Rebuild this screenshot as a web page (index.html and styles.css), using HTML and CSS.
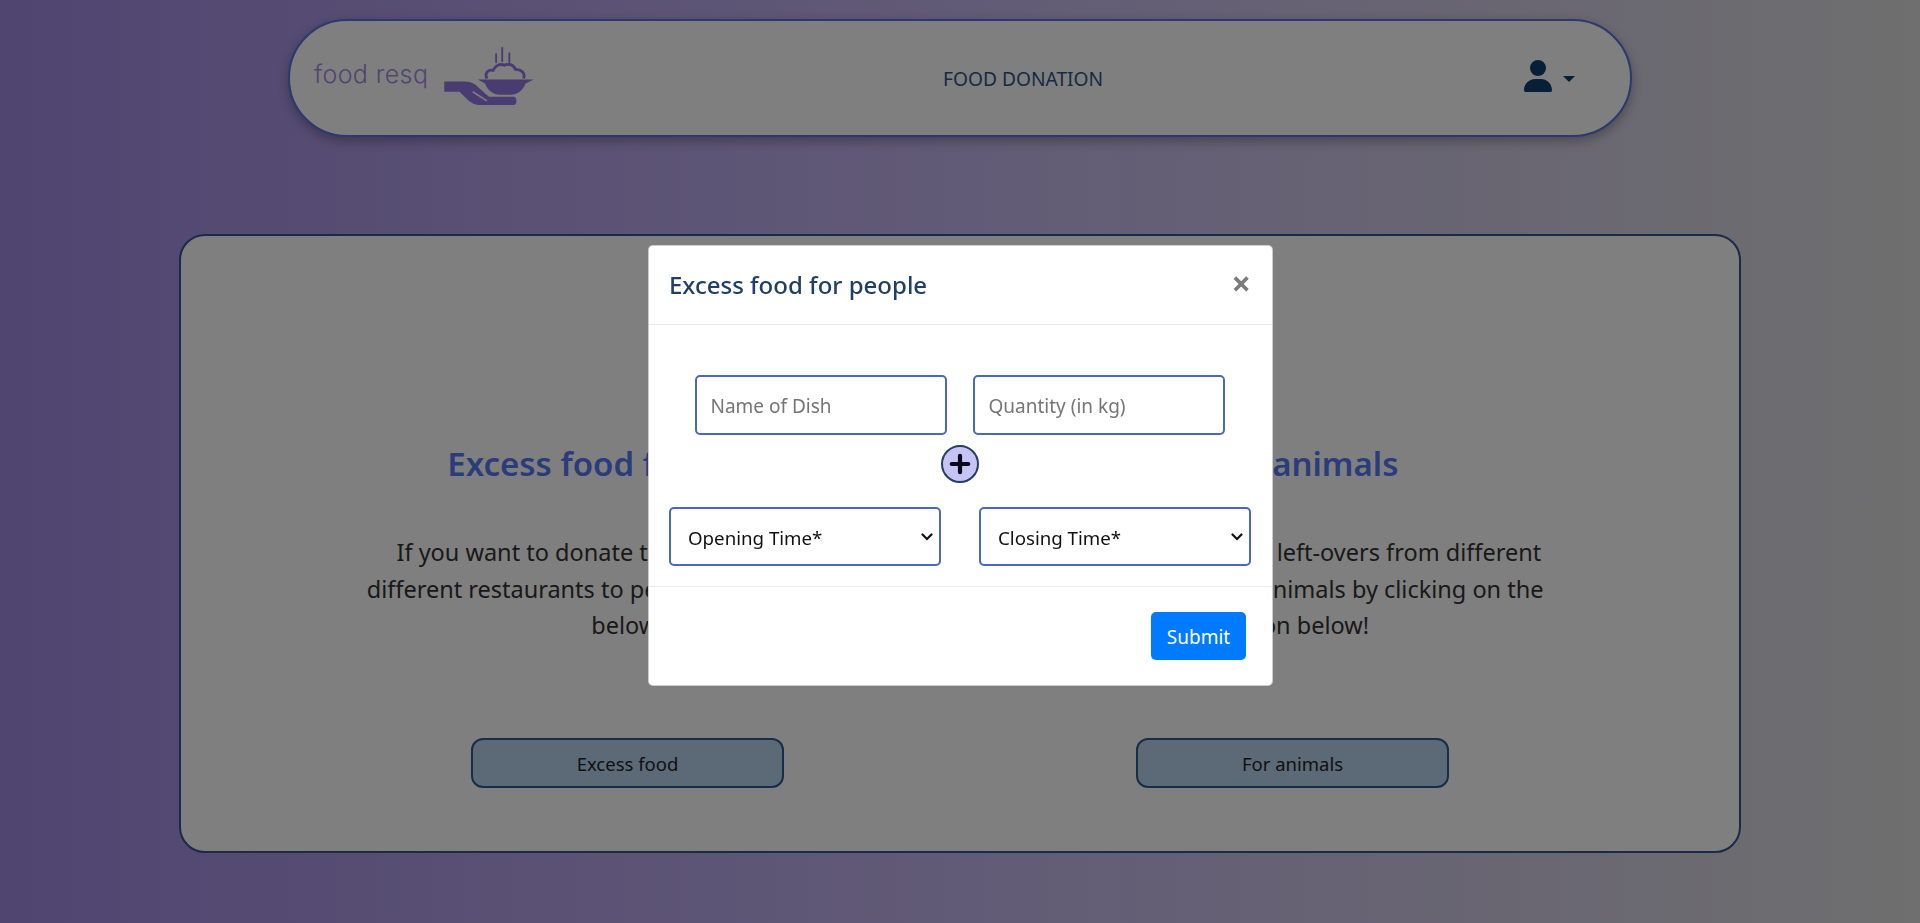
FILE: index.html
```html
<!DOCTYPE html>
<html lang="en">
<head>
<meta charset="utf-8">
<title>Food Resq</title>
<link rel="stylesheet" href="styles.css">
</head>
<body>
<nav class="navbar">
  <a class="brand">
    <span class="brand-text">food resq</span>
    <svg class="brand-icon" viewBox="0 0 88 58" aria-hidden="true">
      <g class="icon-line" stroke-width="1.800" stroke-linecap="round">
        <path d="M51 7v8M57 1v13M64 6v9"/>
      </g>
      <path class="icon-line" stroke-width="2.800" d="M42 31c-3-6 2-9 6-8 2-5 7-7 11-5 4-2 9-1 11 4 6 0 10 4 8 9"/>
      <path class="icon-fill" d="M33 32h55l-8 4c-3 7-8 11-15 11H55c-7 0-12-4-15-11z"/>
      <path class="icon-fill" d="M0 34h20c7 0 11 3 15 7l9 8h24c4 0 4 8 0 8H34c-5 0-9-3-13-7l-6-6H0z"/>
      <path class="icon-notch" d="M28 44l14 9"/>
    </svg>
  </a>
  <span class="nav-title">FOOD DONATION</span>
  <div class="user-menu">
    <svg class="user-icon" viewBox="0 0 448 512" aria-hidden="true"><path d="M224 256a128 128 0 1 0 0-256 128 128 0 0 0 0 256zm-45.700 48C79.800 304 0 383.800 0 482.300 0 498.700 13.300 512 29.700 512h388.600c16.400 0 29.700-13.300 29.700-29.700C448 383.800 368.200 304 269.700 304h-91.400z"/></svg>
    <span class="caret"></span>
  </div>
</nav>

<main class="panel">
  <section class="col">
    <h2 class="col-title">Excess food for people</h2>
    <p class="col-text">If you want to donate this extra food from<br>different restaurants to people, click the button<br>below!</p>
    <button class="col-btn" type="button">Excess food</button>
  </section>
  <section class="col">
    <h2 class="col-title">Feed animals</h2>
    <p class="col-text">You can donate your left-overs from different<br>restaurants to your animals by clicking on the<br>button below!</p>
    <button class="col-btn" type="button">For animals</button>
  </section>
</main>

<div class="backdrop"></div>

<div class="modal">
  <header class="modal-head">
    <h5 class="modal-title">Excess food for people</h5>
    <span class="modal-close">×</span>
  </header>
  <div class="modal-body">
    <div class="dish-row">
      <input class="field" type="text" placeholder="Name of Dish">
      <input class="field" type="text" placeholder="Quantity (in kg)">
    </div>
    <button class="add-btn" type="button">
      <svg viewBox="0 0 20 20" aria-hidden="true"><path d="M10 2.500v15M2.500 10h15" stroke="#0a0a1e" stroke-width="3.800" stroke-linecap="round"/></svg>
    </button>
    <div class="time-row">
      <select class="field time"><option>Opening Time*</option></select>
      <select class="field time"><option>Closing Time*</option></select>
    </div>
  </div>
  <footer class="modal-foot">
    <button class="submit" type="button">Submit</button>
  </footer>
</div>
</body>
</html>
```
FILE: styles.css
```css
* { box-sizing: border-box; }
html, body { height: 100%; }
body {
  margin: 0;
  height: 923px;
  overflow: hidden;
  padding-top: 19px;
  font-family: "Noto Sans", "Open Sans", sans-serif;
  background: linear-gradient(90deg, #a08ae2 0%, #c4b6ee 50%, #dedede 100%);
  color: #000;
}
.navbar {
  width: 1344px;
  height: 118px;
  margin: 0 auto;
  display: grid;
  grid-template-columns: 629px auto 1fr;
  align-items: center;
  padding: 0 55px 0 24px;
  background: #fff;
  border: 2px solid #5a6fe0;
  border-radius: 59px;
  box-shadow: 0 4px 12px rgba(0,0,0,.3);
}
.brand { display: flex; align-items: center; gap: 16px; }
.brand-text {
  font-family: "Inter", sans-serif;
  font-weight: 300;
  font-size: 25px;
  letter-spacing: .4px;
  color: #a08ce0;
  position: relative;
  top: -4px;
}
.brand-icon { width: 90px; height: 59px; margin-top: -3px; }
.icon-line { fill: none; stroke: #9278e0; }
.icon-fill { fill: #9278e0; }
.icon-notch { fill: none; stroke: #fff; stroke-width: 1.500; }
.nav-title { font-size: 19.200px; color: #2f5588; }
.user-menu { display: flex; justify-content: flex-end; align-items: center; gap: 11px; }
.user-icon { width: 28px; height: 32px; fill: #10406f; margin-bottom: 5px; }
.caret {
  width: 0; height: 0;
  margin-top: 2px;
  border-top: 6px solid #10406f;
  border-left: 6px solid transparent;
  border-right: 6px solid transparent;
}
.panel {
  width: 1562px;
  height: 619px;
  margin: 97px auto 0;
  display: grid;
  grid-template-columns: 665px 665px;
  justify-content: center;
  background: #fff;
  border: 2px solid #34548f;
  border-radius: 26px;
}
.col {
  display: flex;
  flex-direction: column;
  align-items: center;
  padding-top: 204px;
}
.col-title {
  margin: 0;
  font-size: 33px;
  line-height: 48px;
  font-weight: 600;
  color: #5678f5;
}
.col-text {
  margin: 46px 0 0;
  font-size: 23.500px;
  line-height: 36.700px;
  white-space: nowrap;
  text-align: center;
  color: #333;
}
.col-btn {
  margin-top: 94px;
  width: 313px;
  height: 50px;
  font: inherit;
  font-size: 18.500px;
  background: #b9d5f0;
  border: 2px solid #2f5a90;
  border-radius: 12px;
  color: #222;
}
.backdrop {
  position: fixed;
  inset: 0;
  background: rgba(0,0,0,.5);
}
.modal {
  position: fixed;
  left: 648px;
  top: 245px;
  width: 625px;
  height: 441px;
  display: flex;
  flex-direction: column;
  background: #fff;
  border: 1px solid rgba(0,0,0,.2);
  border-radius: 5px;
}
.modal-head {
  height: 79px;
  flex: none;
  display: flex;
  justify-content: space-between;
  align-items: center;
  padding: 0 21px 1px 20px;
  border-bottom: 1px solid #e9ecef;
}
.modal-title {
  margin: 0;
  font-size: 24px;
  font-weight: 500;
  color: #1f3f66;
}
.modal-close {
  margin-bottom: 3px;
  font-size: 34px;
  font-weight: 700;
  line-height: 1;
  color: #7b7b7b;
}
.modal-body {
  flex: 1;
  display: flex;
  flex-direction: column;
  align-items: center;
  padding: 50px 22px 0 20px;
}
.dish-row { display: flex; gap: 26px; }
.field {
  background: #fff;
  border: 2px solid #4a68bf;
  border-radius: 5px;
  font: inherit;
  font-size: 19px;
  color: #111;
}
.dish-row .field { width: 252px; height: 60px; padding: 2px 14px 0; }
.field::placeholder { color: #757575; }
.add-btn {
  width: 38px;
  height: 38px;
  margin-top: 10px;
  padding: 0;
  display: flex;
  align-items: center;
  justify-content: center;
  background: #c5c4f4;
  border: 2px solid #263d66;
  border-radius: 50%;
}
.add-btn svg { width: 22px; height: 22px; }
.time-row {
  align-self: stretch;
  display: flex;
  justify-content: space-between;
  margin: 24px -1px 0 0;
}
.time {
  width: 272px;
  height: 59px;
  padding: 2px 30px 0 17px;
  font-size: 18.700px;
  appearance: none;
  background-image: url("data:image/svg+xml,%3Csvg xmlns='http://www.w3.org/2000/svg' viewBox='0 0 12 8'%3E%3Cpath d='M1.500 1.500L6 6l4.500-4.500' fill='none' stroke='%23111' stroke-width='2.200' stroke-linecap='round'/%3E%3C/svg%3E");
  background-repeat: no-repeat;
  background-position: right 6px center;
  background-size: 12px 8px;
}
.modal-foot {
  height: 99px;
  flex: none;
  display: flex;
  justify-content: flex-end;
  align-items: center;
  padding: 0 26px 0 0;
  border-top: 1px solid #e9ecef;
}
.submit {
  width: 95px;
  height: 48px;
  padding-top: 3px;
  background: #007bff;
  border: 0;
  border-radius: 5px;
  color: #fff;
  font: inherit;
  font-size: 19px;
}
```
